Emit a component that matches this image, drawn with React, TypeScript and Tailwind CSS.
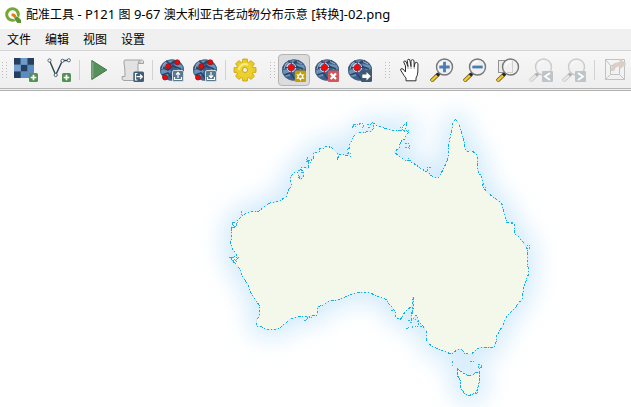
import type { ReactNode } from "react";

const MAINLAND =
  "M231 229L233 223L238 220L243 215L251 211L259 211L264 207L270 203L279 201L286 197L289 189L292 186L290 180L292 175L296 171L298 173L299 178L301 180L304 175L303 171L300 169L301 168L305 167L308 169L309 163L307 161L313 159L314 156L313 153L319 152L320 148L324 148L327 146L332 148L337 153L339 156L337 160L339 155L341 154L345 155L350 156L347 150L350 148L349 145L351 142L354 136L357 133L361 132L366 132L372 131L374 127L373 123L378 126L384 128L390 130L396 131L401 130L403 126L407 122L406 128L404 131L409 132L406 135L405 139L402 140L400 144L399 148L394 152L400 157L405 160L409 160L412 162L420 168L427 172L433 177L439 177L444 168L448 158L449 143L451 133L453 123L455 119L459 124L462 134L464 142L465 148L467 152L471 150L477 155L478 171L482 178L483 187L487 192L493 197L501 203L503 209L505 215L507 223L509 222L514 224L514 233L519 237L523 242L528 250L527 260L529 273L524 286L522 299L516 307L507 316L502 327L497 335L496 342L494 347L490 348L480 347L470 355L465 353L461 349L457 350L451 354L438 349L431 346L426 339L426 330L422 325L419 322L416 315L412 320L411 315L414 307L413 297L412 306L405 312L400 320L396 317L395 312L392 307L389 304L387 300L380 297L370 293L362 292L352 294L345 297L338 300L330 300L325 304L318 307L317 315L310 316L298 317L290 319L286 323L280 328L272 330L265 329L262 327L257 326L256 320L259 317L259 305L252 295L250 291L249 287L242 275L239 268L235 264L230 258L234 256L239 259L236 254L233 250L230 243L232 237Z";
const TASMANIA =
  "M457 369L457 375L459 378L460 380L461 388L464 393L468 396L473 394L477 393L478 387L479 383L479 372L475 373L473 375L469 376L465 374L462 372Z";
const ISLETS =
  "M352 128L354 124L358 125L361 123L363 124L363 127L360 128M352 126L356 127M353 125L355 128M367 124L370 125L373 122L373 130M368 128L371 126M405 143L409 144L409 148L405 147M400 127L406 133M398 130L409 131M427 171L428 167L431 167M408 158L412 163M412 307L412 315M408 320L412 321L410 324M406 328L409 328L408 326M415 319L418 322L418 326L412 328L412 325M420 326L423 326M391 311L393 310M452 361L454 364L452 366M470 361L474 361M478 364L482 366L480 369L478 366M457 368L460 371M475 394L477 390M304 320L306 321L308 317L312 318M242 211L241 216M232 222L235 228M229 257L231 257L235 264L237 262L232 257L237 260M232 228L236 226L238 221M529 249L530 246L527 245M301 172L304 174M306 159L311 163M306 162L312 160M307 157L309 165M298 171L303 169M299 176L302 180M347 154L352 153M461 349L465 354M483 183L486 188M501 204L504 204M512 222L515 226";

const BOX = "h-6 w-6 shrink-0";

function Plus({ x, y }: { x: number; y: number }) {
  return (
    <g>
      <rect x={x} y={y} width="9" height="9" rx="1.5" fill="#549055" />
      <path d={`M${x + 4.5} ${y + 1.7}v5.6M${x + 1.7} ${y + 4.5}h5.6`} stroke="#fff" strokeWidth="1.7" />
    </g>
  );
}

function RasterIcon() {
  return (
    <svg viewBox="0 0 24 24" className={BOX}>
      <rect width="20" height="20" fill="#5c8cbf" />
      <path d="M0 0h6.7v6.7H0zM13.3 0H20v6.7h-6.7zM6.7 6.7h6.6v6.6H6.7zM0 13.3h6.7V20H0z" fill="#25405f" />
      <path d="M6.7 0h6.6v6.7H6.7z" fill="#6f9bcb" />
      <path d="M0 6.7h6.7v6.6H0z" fill="#729fcf" />
      <Plus x={15} y={15} />
    </svg>
  );
}

function VectorIcon() {
  return (
    <svg viewBox="0 0 24 24" className={BOX}>
      <path d="M2.5 2.5L8.7 17L15.5 2.5H22" fill="none" stroke="#2f4354" strokeWidth="1.4" />
      <g fill="#fff" stroke="#53616c">
        <circle cx="2.5" cy="2.5" r="1.6" />
        <circle cx="8.7" cy="17" r="1.6" />
        <circle cx="15.5" cy="2.8" r="1.6" />
        <circle cx="21.8" cy="2.3" r="1.6" />
      </g>
      <Plus x={15} y={15} />
    </svg>
  );
}

function PlayIcon() {
  return (
    <svg viewBox="0 0 24 24" className={BOX}>
      <path d="M4.8 2.5V21.5L19.8 12Z" fill="#56905a" stroke="#417649" />
      <path d="M5.8 4v16" stroke="#8db68e" strokeWidth="1" />
    </svg>
  );
}

function ScriptIcon() {
  return (
    <svg viewBox="0 0 24 24" className={BOX}>
      <path d="M5 2Q3.500 2 4 5Q5 10 5 18.500H2Q1.500 22.500 4 22.500H18V5.500H23.500V3Q23 2 21 2Z" fill="#e2e2e2" stroke="#a3a3a3" />
      <path d="M20 2Q18 3 18.500 5.500H22" fill="#c7c7c7" stroke="#a3a3a3" />
      <rect x="13.300" y="13.500" width="10.700" height="10.500" rx="1.500" fill="#3e5e75" />
      <path d="M17.500 15.500H15.500V22H17.500M16.500 18.700H22M20 16.500L22.300 18.700L20 21" fill="none" stroke="#fff" strokeWidth="1.200" />
    </svg>
  );
}

function GlobeBase() {
  return (
    <g>
      <ellipse cx="12" cy="12" rx="12" ry="10.500" fill="#3c608d" />
      <path d="M3 6Q7 1.500 13 2L10 6L4 9ZM0 13L6 10L11 13L8 18L3 19ZM14 6L22 7L23.500 11L18 12Z" fill="#6b92b9" />
      <path d="M6 2.800L10 6L17 2.500M1 9L8 12L13 8L21 11M2 17L8 15L13 21" fill="none" stroke="#294566" strokeWidth="1.600" />
      <path d="M2 11Q3 6 6 4M15 3.500L20 6" fill="none" stroke="#9ab3ca" strokeWidth="1" />
      <ellipse cx="12" cy="12" rx="11.600" ry="10.200" fill="none" stroke="#49617d" strokeWidth=".8" />
    </g>
  );
}

function PointsIcon({ save = false }: { save?: boolean }) {
  return (
    <svg viewBox="0 0 24 24" className={BOX}>
      <GlobeBase />
      <g fill="#ef0505" stroke="#8a1720" strokeWidth=".8">
        <circle cx="17.300" cy="4.300" r="2.500" />
        <circle cx="8.300" cy="8.300" r="2.500" />
        <circle cx="5" cy="19.500" r="2.500" />
      </g>
      <rect x="12.500" y="12.500" width="11" height="11" rx="1.500" fill="#58798d" stroke="#d1dbe1" />
      <path
        d={save ? "M18 14V19.500M16 17.500L18 19.700L20 17.500M14.500 19V21.500H21.500V19" : "M18 20V14.500M16 16.700L18 14.500L20 16.700M14.500 19V21.500H21.500V19"}
        fill="none"
        stroke="#fff"
        strokeWidth="1.200"
      />
    </svg>
  );
}

function GearIcon() {
  const angles = [0, 45, 90, 135, 180, 225, 270, 315];
  return (
    <svg viewBox="0 0 24 24" className={BOX}>
      <g fill="#eacb23" stroke="#c4a00f" strokeWidth=".8">
        {angles.map((a) => (
          <path key={a} d="M9 6L9.700 1H14.300L15 6Z" transform={`rotate(${a} 12 12)`} />
        ))}
      </g>
      <circle cx="12" cy="12" r="8" fill="#edcf2d" />
      <path d="M6 12A6 6 0 0 1 15 6.800" fill="none" stroke="#fbed80" strokeWidth="2" />
      <circle cx="12" cy="12" r="2.500" fill="#f4f4f0" stroke="#c2a324" />
    </svg>
  );
}

function TargetIcon({ kind }: { kind: "add" | "delete" | "move" }) {
  return (
    <svg viewBox="0 0 24 24" className={BOX}>
      <GlobeBase />
      <circle cx="9.300" cy="9.500" r="4.300" fill="none" stroke="#dfe4ea" strokeWidth="1" />
      <path d="M9.300 3.500V15.500M3.300 9.500H15.300" stroke="#a3142a" strokeWidth="1" />
      <path d="M9.300 5.500L13.300 9.500L9.300 13.500L5.300 9.500Z" fill="#f90606" />
      {kind === "add" && (
        <g>
          <rect x="12.800" y="12.500" width="11.200" height="11.500" rx="1.500" fill="#c4a000" />
          <path d="M18.400 14L19.600 16.500L22.500 16.300L21 18.500L22.500 21L19.600 20.600L18.400 23L17.100 20.600L14.400 21L15.800 18.500L14.400 16.300L17.100 16.500Z" fill="#fff" />
          <circle cx="18.400" cy="18.500" r="1.500" fill="#c4a000" />
        </g>
      )}
      {kind === "delete" && (
        <g>
          <rect x="12.800" y="12.500" width="11.200" height="11.500" rx="1.500" fill="#d45559" />
          <path d="M15.700 15.500L21 21M21 15.500L15.700 21" stroke="#fff" strokeWidth="2.200" />
        </g>
      )}
      {kind === "move" && (
        <g>
          <rect x="12.800" y="12.500" width="11.200" height="11.500" rx="1.500" fill="#41596a" />
          <path d="M14.300 16.500H18.500V14L22.800 18.300L18.500 22.500V20H14.300Z" fill="#fff" />
        </g>
      )}
    </svg>
  );
}

function HandIcon() {
  return (
    <svg viewBox="0 0 24 24" className={BOX}>
      <path
        d="M9 22.800V20Q7 18 5.500 15L3.500 12Q3.500 9.800 6 11L8.500 14V8L6.700 4Q7 2 9 3.500L11 8.500L10.300 2.500Q10.800 .5 12.700 1.500L14 8.500V2.500Q15.500 .7 17 2.500L17.200 9L18 5Q20 3.500 21 5.500L20.800 14Q20.600 17.500 19 20V22.800Z"
        fill="#fff"
        stroke="#303030"
        strokeWidth="1"
        strokeLinejoin="round"
      />
      <path d="M11 8.500V11M14 8V11M17.200 9V11" stroke="#555" strokeWidth=".6" />
    </svg>
  );
}

function ZoomIcon({ kind }: { kind: "in" | "out" | "layer" | "last" | "next" }) {
  const muted = kind === "last" || kind === "next";
  return (
    <svg viewBox="0 0 24 24" className={BOX}>
      {kind === "layer" && <rect x="2.500" y="2.500" width="14" height="12" fill="#ebebeb" stroke="#929292" />}
      <g opacity={muted ? 0.32 : 1}>
        <path d="M1 23.200L8.500 16" stroke={muted ? "#777" : "#74601c"} strokeWidth="4" />
        <path d="M1.300 22.900L7.500 17" stroke={muted ? "#d7d4c9" : "#f5c935"} strokeWidth="2.400" />
        <path d="M7 17.500L10 14.500" stroke="#252525" strokeWidth="3" />
        <circle cx="14.500" cy="9" r="8" fill="#f0f0f0" stroke="#777" strokeWidth="1.400" />
        <path d="M9.500 8Q11 3.500 15 3.500" fill="none" stroke="#fff" strokeWidth="1.500" />
      </g>
      {kind === "in" && <path d="M14.500 3.800V14.200M9.300 9H19.700" stroke="#4b7db5" strokeWidth="2.800" />}
      {kind === "out" && <path d="M9.300 9H19.700" stroke="#4b7db5" strokeWidth="2.800" />}
      {kind === "layer" && <path d="M16.500 3V14.500H11" fill="none" stroke="#c6c6c6" strokeWidth=".8" />}
      {muted && (
        <g>
          <rect x="13" y="13" width="11" height="11" rx="1" fill="#bdc5ca" />
          <path d={kind === "last" ? "M21 15L16 18.500L21 22" : "M16 15L21 18.500L16 22"} fill="none" stroke="#fff" strokeWidth="1.800" />
        </g>
      )}
    </svg>
  );
}

function LinkIcon() {
  return (
    <svg viewBox="0 0 24 24" className={BOX}>
      <path d="M3.500 1.500H22.500V21.500H3.500ZM8.500 7.500H17.500V16.500H8.500ZM3.500 1.500L8.500 7.500M22.500 21.500L17.500 16.500M3.500 21.500L8.500 16.500" fill="none" stroke="#c2c2c2" strokeWidth="1" />
      <path d="M9 13Q8 4.500 17.500 4V.500L24.500 6L17.500 11.500V8.500Q12.500 8.500 12.500 13Z" fill="#d9cec8" />
    </svg>
  );
}

function Logo() {
  return (
    <svg viewBox="0 0 16 16" className="h-4 w-4 shrink-0" aria-hidden="true">
      <circle cx="7.500" cy="7.500" r="5.800" fill="none" stroke="#73a834" strokeWidth="3" />
      <path d="M8 8L15 15" stroke="#fff" strokeWidth="5" />
      <path d="M9.500 9.500H12.500L16 13V16H12.500L9.500 12.500Z" fill="#589632" />
      <path d="M6.500 6.500H9.200L11 8.200V11L9.500 10.700L6.500 8.800Z" fill="#ee7913" />
    </svg>
  );
}

function Tool({ label, children, pressed, disabled }: { label: string; children: ReactNode; pressed?: boolean; disabled?: boolean }) {
  return (
    <button
      type="button"
      aria-label={label}
      title={label}
      aria-pressed={pressed}
      disabled={disabled}
      className={
        pressed
          ? "flex h-8 w-8 shrink-0 items-center justify-center rounded-sm border border-[#b4b4b4] bg-[#dcdcdc]"
          : "flex h-8 w-8 shrink-0 items-center justify-center rounded-sm"
      }
    >
      {children}
    </button>
  );
}

function Group({ children }: { children: ReactNode }) {
  return <div className="flex shrink-0 gap-px">{children}</div>;
}

function Divider() {
  return (
    <div className="flex w-2 shrink-0 justify-center">
      <span className="h-5 w-px bg-[#d2d2d2]" />
    </div>
  );
}

function Handle({ first }: { first?: boolean }) {
  return (
    <div className={first ? "flex w-[10px] shrink-0 pl-0.5" : "flex w-[17px] shrink-0 pl-[9px]"}>
      <svg viewBox="0 0 5 18" className="h-[18px] w-[5px]" aria-hidden="true">
        <path d="M.5 1V18M4.500 1V18" stroke="#bcbcbc" strokeDasharray="1 2" />
      </svg>
    </div>
  );
}

function CoastMap() {
  return (
    <svg viewBox="0 91 631 316" className="h-[316px] w-[631px] max-w-none" role="img" aria-label="澳大利亚地图">
      <defs>
        <filter id="sea" x="-20%" y="-20%" width="140%" height="140%" colorInterpolationFilters="sRGB">
          <feGaussianBlur stdDeviation="12" />
        </filter>
      </defs>
      <g filter="url(#sea)" fill="#d3ebfb" stroke="#d3ebfb" strokeWidth="16" strokeLinejoin="round">
        <path d={MAINLAND} />
        <path d={TASMANIA} />
      </g>
      <g fill="#f4f8eb" shapeRendering="crispEdges">
        <path d={MAINLAND} stroke="#cfeaf5" />
        <path d={TASMANIA} stroke="#cfeaf5" />
        <path d={MAINLAND} fill="none" stroke="#10afe8" strokeDasharray="2 2 1 1 3 2 1 2" />
        <path d={TASMANIA} fill="none" stroke="#10afe8" strokeDasharray="2 1 3 1" />
        <path d={ISLETS} fill="none" stroke="#27b5e9" strokeDasharray="2 1 1 1" />
      </g>
    </svg>
  );
}

function Latin({ children }: { children: ReactNode }) {
  return <span className="text-[13px]">{children}</span>;
}

export default function App() {
  return (
    <div className="flex h-screen flex-col overflow-hidden bg-white font-['Noto_Sans','Noto_Sans_CJK_SC',sans-serif] text-xs text-black">
      <header className="flex h-[29px] shrink-0 items-center gap-[5px] pl-[5px]">
        <Logo />
        <h1 className="whitespace-nowrap">
          配准工具<Latin> - P121 </Latin>图<Latin> 9-67 </Latin>澳大利亚古老动物分布示意<Latin> [</Latin>转换<Latin>]-02.png</Latin>
        </h1>
      </header>
      <nav className="flex h-[21px] shrink-0 items-center gap-[14px] bg-[#f0f0f0] pl-[7px]">
        <button type="button">文件</button>
        <button type="button">编辑</button>
        <button type="button">视图</button>
        <button type="button">设置</button>
      </nav>
      <div role="toolbar" aria-label="工具栏" className="flex h-[39px] shrink-0 items-center overflow-hidden border-y border-t-[#d4d4d4] border-b-[#b5b5b5] bg-linear-to-b from-[#f7f7f7] to-[#eeeeee]">
        <Handle first />
        <Group>
          <Tool label="打开栅格"><RasterIcon /></Tool>
          <Tool label="打开矢量"><VectorIcon /></Tool>
        </Group>
        <Divider />
        <Group>
          <Tool label="开始配准"><PlayIcon /></Tool>
          <Tool label="生成脚本"><ScriptIcon /></Tool>
        </Group>
        <Divider />
        <Group>
          <Tool label="加载控制点"><PointsIcon /></Tool>
          <Tool label="保存控制点"><PointsIcon save /></Tool>
        </Group>
        <Divider />
        <Tool label="变换设置"><GearIcon /></Tool>
        <Handle />
        <Group>
          <Tool label="添加控制点" pressed><TargetIcon kind="add" /></Tool>
          <Tool label="删除控制点"><TargetIcon kind="delete" /></Tool>
          <Tool label="移动控制点"><TargetIcon kind="move" /></Tool>
        </Group>
        <Handle />
        <Group>
          <Tool label="平移"><HandIcon /></Tool>
          <Tool label="放大"><ZoomIcon kind="in" /></Tool>
          <Tool label="缩小"><ZoomIcon kind="out" /></Tool>
          <Tool label="缩放到图层"><ZoomIcon kind="layer" /></Tool>
          <Tool label="上一视图" disabled><ZoomIcon kind="last" /></Tool>
          <Tool label="下一视图" disabled><ZoomIcon kind="next" /></Tool>
        </Group>
        <Divider />
        <Tool label="关联视图" disabled><LinkIcon /></Tool>
      </div>
      <div className="h-0.5 shrink-0 border-b border-[#b0b0b0] bg-[#f0f0f0]" />
      <main className="min-h-0 flex-1 overflow-hidden">
        <CoastMap />
      </main>
    </div>
  );
}
